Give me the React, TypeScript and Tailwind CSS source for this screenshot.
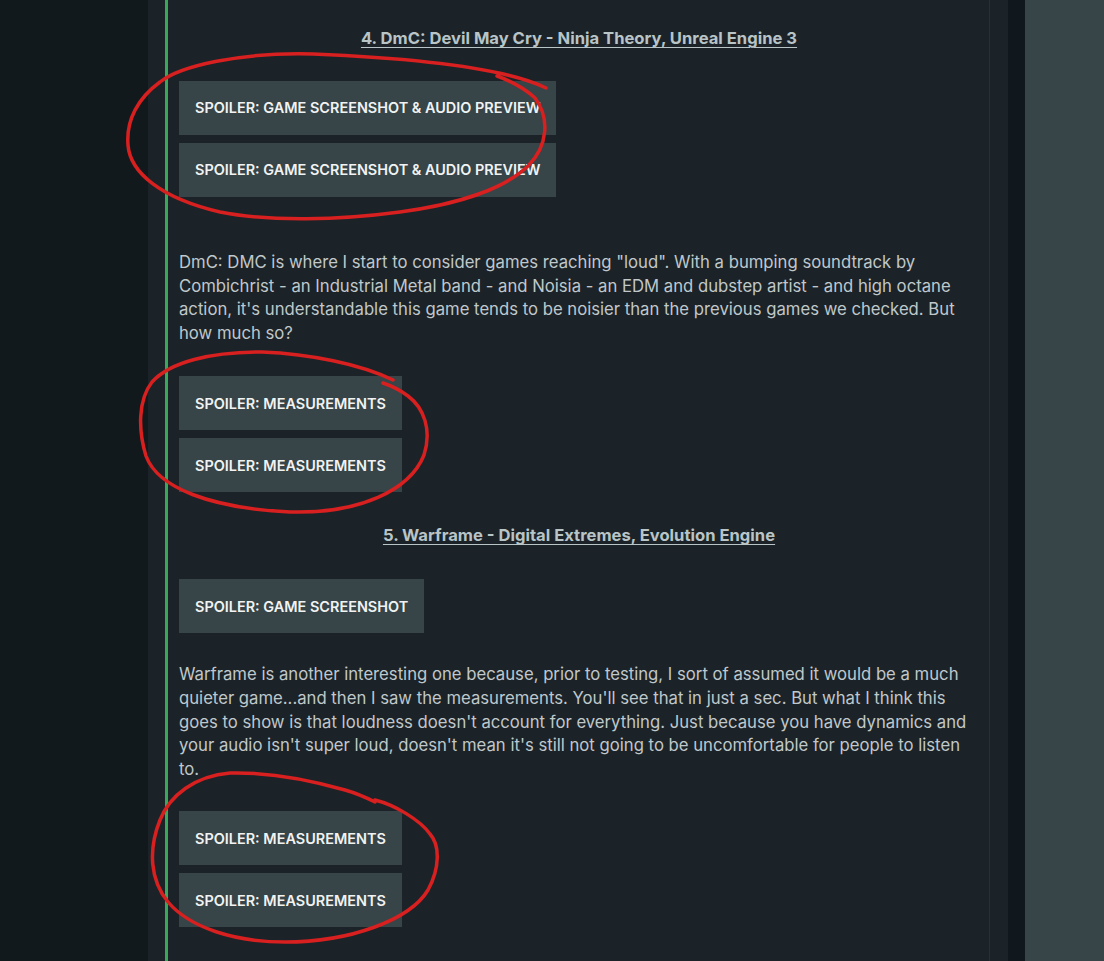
import React from "react";

const font = { fontFamily: "Inter, 'Noto Sans', sans-serif" };

function Spoiler({ label }: { label: string }) {
  return (
    <div className="flex">
      <button className="h-[54px] bg-[#374448] px-4 text-[14.45px] font-semibold text-[#f1f3f3]">
        {label}
      </button>
    </div>
  );
}

function Heading({ children }: { children: React.ReactNode }) {
  return (
    <h3 className="text-center text-[16.6px] font-bold leading-6 text-[#b9c4c7] underline underline-offset-[3px] decoration-1">
      {children}
    </h3>
  );
}

function Body({ children }: { children: React.ReactNode }) {
  return <p className="text-[16.7px] leading-[23.6px] text-[#c0c8cb]">{children}</p>;
}

export default function App() {
  return (
    <div className="relative flex h-[961px] w-full overflow-hidden bg-[#12191d]" style={font}>
      <div className="w-[148px] shrink-0 bg-[#12191d]" />
      <div className="flex w-[860px] shrink-0 bg-[#1b2328] pl-[17px]">
        <article className="w-[825px] border-l-[3px] border-r border-l-[#3aa85b] border-r-[#273036] pl-[11px] pr-3 pt-[26px]">
          <div className="flex w-[800px] flex-col">
            <Heading>4. DmC: Devil May Cry - Ninja Theory, Unreal Engine 3</Heading>
            <div className="mt-[31px] flex flex-col gap-2">
              <Spoiler label="SPOILER: GAME SCREENSHOT & AUDIO PREVIEW" />
              <Spoiler label="SPOILER: GAME SCREENSHOT & AUDIO PREVIEW" />
            </div>
            <div className="mt-[54px]">
              <Body>
                DmC: DMC is where I start to consider games reaching "loud". With a bumping soundtrack by
                Combichrist - an Industrial Metal band - and Noisia - an EDM and dubstep artist - and high octane
                action, it's understandable this game tends to be noisier than the previous games we checked. But
                how much so?
              </Body>
            </div>
            <div className="mt-[31px] flex flex-col gap-2">
              <Spoiler label="SPOILER: MEASUREMENTS" />
              <Spoiler label="SPOILER: MEASUREMENTS" />
            </div>
            <div className="mt-[31px]">
              <Heading>5. Warframe - Digital Extremes, Evolution Engine</Heading>
            </div>
            <div className="mt-[32px]">
              <Spoiler label="SPOILER: GAME SCREENSHOT" />
            </div>
            <div className="mt-[30px]">
              <Body>
                Warframe is another interesting one because, prior to testing, I sort of assumed it would be a much
                quieter game...and then I saw the measurements. You'll see that in just a sec. But what I think this
                goes to show is that loudness doesn't account for everything. Just because you have dynamics and
                your audio isn't super loud, doesn't mean it's still not going to be uncomfortable for people to listen
                to.
              </Body>
            </div>
            <div className="mt-[30px] flex flex-col gap-2">
              <Spoiler label="SPOILER: MEASUREMENTS" />
              <Spoiler label="SPOILER: MEASUREMENTS" />
            </div>
          </div>
        </article>
      </div>
      <div className="w-[17px] shrink-0 bg-[#11181d]" />
      <div className="flex-1 bg-[#374548]" />

      {/* hand-drawn red marker rings */}
      <svg
        className="pointer-events-none absolute left-0 top-0"
        width="1104"
        height="961"
        viewBox="0 0 1104 961"
        fill="none"
        stroke="#d7201f"
        strokeWidth="3.5"
        strokeLinecap="round"
        strokeLinejoin="round"
      >
        <path d="M546 88 C505 68 410 58 313 54 C240 52 180 66 160 82 C138 98 126 120 128 145 C130 172 160 198 220 212 C270 222 340 220 400 212 C460 204 505 188 528 166 C548 146 550 118 535 98 C522 86 508 80 497 76" />
        <path d="M393 380 C360 364 310 354 262 352 C210 352 170 362 152 382 C138 400 138 430 146 456 C158 488 210 508 290 512 C360 514 410 490 424 455 C432 430 424 408 408 396 C400 390 392 386 383 383" />
        <path d="M375 802 C365 797 352 792 345 790 C310 780 270 772 230 773 C195 776 170 795 160 820 C148 850 150 880 168 902 C190 928 235 942 285 942 C350 942 410 920 428 890 C440 868 440 845 430 834 C420 820 395 805 375 800" />
      </svg>
    </div>
  );
}
